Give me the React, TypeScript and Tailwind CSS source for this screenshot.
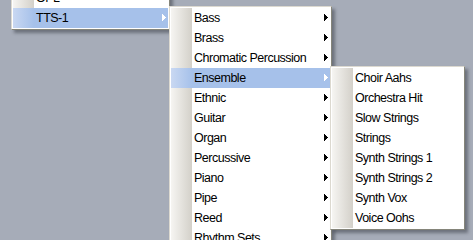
import React from "react";

type Item = { label: string; sub?: boolean; active?: boolean };

function Arrow({ white }: { white?: boolean }) {
  return (
    <svg width="4" height="7" viewBox="0 0 4 7" className="shrink-0 self-start mt-[6px] mr-[2px]" shapeRendering="crispEdges">
      <polygon points="0,0 4,3.5 0,7" fill={white ? "#ffffff" : "#000000"} />
    </svg>
  );
}

function Row({ item }: { item: Item }) {
  return (
    <div className={`flex h-5 items-stretch ${item.active ? "bg-[#a6c1ea]" : "bg-white"}`}>
      <div
        className={`w-[21px] shrink-0 bg-gradient-to-r ${
          item.active ? "from-[#c9d8f2] to-[#a6c1ea]" : "from-[#f6f5f2] to-[#d3d0c9]"
        }`}
      />
      <div className="flex-1 pl-[2px] text-[12.5px] leading-5 tracking-[-0.5px] text-black whitespace-nowrap">
        {item.label}
      </div>
      {item.sub ? <Arrow white={item.active} /> : null}
    </div>
  );
}

function Menu({ items, className }: { items: Item[]; className: string }) {
  return (
    <div
      className={`absolute flex flex-col p-px border border-t-[#dcd9d0] border-l-[#dcd9d0] border-r-[#85857a] border-b-[#85857a] bg-white shadow-[3px_3px_3px_rgba(40,44,52,0.45)] ${className}`}
    >
      {items.map((it) => (
        <Row key={it.label} item={it} />
      ))}
    </div>
  );
}

const first: Item[] = [
  { label: "OPL" },
  { label: "TTS-1", sub: true, active: true },
];

const second: Item[] = [
  { label: "Bass", sub: true },
  { label: "Brass", sub: true },
  { label: "Chromatic Percussion", sub: true },
  { label: "Ensemble", sub: true, active: true },
  { label: "Ethnic", sub: true },
  { label: "Guitar", sub: true },
  { label: "Organ", sub: true },
  { label: "Percussive", sub: true },
  { label: "Piano", sub: true },
  { label: "Pipe", sub: true },
  { label: "Reed", sub: true },
  { label: "Rhythm Sets", sub: true },
];

const third: Item[] = [
  { label: "Choir Aahs" },
  { label: "Orchestra Hit" },
  { label: "Slow Strings" },
  { label: "Strings" },
  { label: "Synth Strings 1" },
  { label: "Synth Strings 2" },
  { label: "Synth Vox" },
  { label: "Voice Oohs" },
];

export default function App() {
  return (
    <div className="relative w-[473px] h-[240px] overflow-hidden bg-[#a6acb8] font-['Liberation_Sans',Arial,sans-serif]">
      <Menu items={first} className="left-[11px] top-[-14px] w-[159px]" />
      <Menu items={second} className="left-[169px] top-[6px] w-[163px]" />
      <Menu items={third} className="left-[330px] top-[66px] w-[135px]" />
    </div>
  );
}
